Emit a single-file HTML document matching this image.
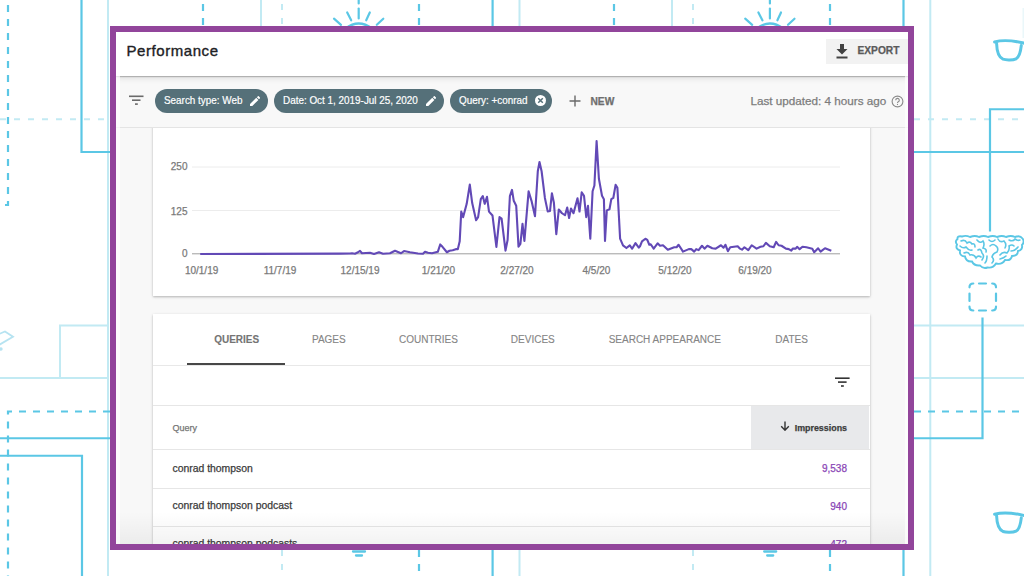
<!DOCTYPE html>
<html><head><meta charset="utf-8">
<style>
*{margin:0;padding:0;box-sizing:border-box}
html,body{width:1024px;height:576px;overflow:hidden;background:#fff;font-family:"Liberation Sans",sans-serif}
.abs{position:absolute}
#bg{position:absolute;left:0;top:0}
#frame{position:absolute;left:110px;top:26px;width:804px;height:524px;border:6px solid #92459b;background:#f5f5f5;overflow:hidden}
#inner{position:absolute;left:0;top:0;width:792px;height:512px;overflow:hidden}

#ui{position:absolute;left:0;top:0;width:1024px;height:576px;clip-path:inset(32px 116px 32px 116px);background:transparent}
#uibg{}
#frame2{position:absolute;left:110px;top:26px;width:804px;height:524px;border:6px solid #92459b;z-index:10}
.t{line-height:1;white-space:nowrap;-webkit-text-stroke-width:.25px}
.b{font-weight:bold}
.chip{position:absolute;top:88.6px;height:24.5px;border-radius:12.25px;background:#557079;z-index:4}
.chip span{-webkit-text-stroke-width:.2px;position:absolute;top:6.4px;font-size:11px;transform:scaleX(.9);transform-origin:0 0;line-height:1;color:#fff;white-space:nowrap}
.pen{position:absolute;top:7.6px}
.card{background:#fff;box-shadow:0 1px 2px rgba(0,0,0,.22),0 1px 4px rgba(0,0,0,.08);z-index:1}
.ax{font-size:10px;color:#7a7a7a;z-index:2}
.xl{width:80px;text-align:center}
.tab{top:334.8px;width:80px;margin-left:0;text-align:center;font-size:10px;color:#858585;-webkit-text-stroke-width:.12px;z-index:2}
.row{left:172.5px;font-size:10.4px;color:#3a3a3a;z-index:2}
.num{left:760px;width:87px;text-align:right;font-size:10px;color:#8a46b6;z-index:2}
</style></head><body>
<svg id="bg" width="1024" height="576" viewBox="0 0 1024 576">
<g fill="none" stroke-linecap="butt">
<!-- light lines -->
<g stroke="#c2eaf3" stroke-width="2">
<line x1="108" y1="0" x2="108" y2="576"/>
<line x1="930.3" y1="0" x2="930.3" y2="576"/>
<line x1="1023.5" y1="8" x2="1023.5" y2="38" stroke="#eaf7fa"/>
<line x1="261" y1="0" x2="261" y2="30"/>
<line x1="519.5" y1="0" x2="519.5" y2="576"/>
<line x1="672" y1="0" x2="672" y2="30"/>
<polyline points="108,325.5 60,325.5 60,378"/>
<line x1="0" y1="378" x2="108" y2="378"/>
<line x1="914" y1="325.5" x2="1024" y2="325.5"/>
<line x1="914" y1="378" x2="1024" y2="378"/>
</g>
<g stroke="#c2eaf3" stroke-width="2" stroke-dasharray="6 8">
<line x1="0" y1="119.25" x2="107" y2="119.25"/>
<line x1="914" y1="119.25" x2="1024" y2="119.25"/>
<line x1="282" y1="4" x2="282" y2="576"/>
<line x1="693" y1="4" x2="693" y2="576"/>
</g>
<!-- medium lines -->
<g stroke="#5bc7e5" stroke-width="2.2">
<polyline points="81.5,0 81.5,152 110,152"/>
<line x1="0" y1="438.25" x2="110" y2="438.25"/>
<polyline points="0,455.75 82,455.75 82,576"/>
<line x1="492.6" y1="0" x2="492.6" y2="576"/>
<line x1="903.5" y1="0" x2="903.5" y2="576"/>
<polyline points="1024,109.25 990,109.25 990,231.5"/>
<line x1="914" y1="152" x2="1024" y2="152"/>
<polyline points="982.5,317.5 982.5,438.25 914,438.25"/>
</g>
<g stroke="#5bc7e5" stroke-width="2.2" stroke-dasharray="7 7">
<polyline points="8,5 8,205 4,205"/>
<polyline points="110,411.5 8,411.5 8,576"/>
<line x1="914" y1="411.5" x2="1024" y2="411.5"/>
<line x1="203" y1="4" x2="203" y2="30"/>
<line x1="419" y1="4" x2="419" y2="576"/>
<line x1="614" y1="4" x2="614" y2="30"/>
<line x1="830" y1="4" x2="830" y2="576"/>
</g>
</g>

<g stroke="#5bc7e5" stroke-width="2.2" fill="none" stroke-linecap="round">
 <path d="M969.5,287.3 Q969.5,283.5 973.3,283.5 M979,283.5 H986 M992.2,283.5 Q996,283.5 996,287.3 M969.5,293.5 V301 M996,293.5 V301 M969.5,306.7 Q969.5,310.5 973.3,310.5 M992.2,310.5 Q996,310.5 996,306.7 M979,310.5 H986"/>
</g>
<g fill="none" stroke="#5bc7e5" stroke-width="2.2" stroke-linecap="round">
 <g id="bulb">
  <line x1="358.7" y1="-2" x2="358.7" y2="3.5"/>
  <line x1="358.7" y1="8.5" x2="358.7" y2="18.5"/>
  <line x1="347.2" y1="12.5" x2="351.2" y2="20.3"/>
  <line x1="369.8" y1="12.5" x2="366.2" y2="20.3"/>
  <line x1="334" y1="18.7" x2="341" y2="24.8"/>
  <line x1="383.3" y1="18.7" x2="376.8" y2="24.8"/>
  <path d="M345.5,28.5 Q358.7,18.5 372,28.5"/>
 </g>
 <use href="#bulb" x="411.2"/>
 <g id="bulbb" stroke-width="2.3">
  <line x1="353" y1="551.5" x2="365" y2="551.5"/>
  <line x1="356" y1="555.5" x2="362" y2="555.5"/>
 </g>
 <use href="#bulbb" x="411.2"/>
 <g id="glass" stroke-width="3">
  <path d="M994.6,42 Q1006,38.6 1026,43.6"/>
  <path d="M996.6,43.5 C996.8,50 998,57 1003,59.2 C1006,60.2 1013,60.2 1016,58.8 C1019.5,57 1020.6,52 1021.3,45.5"/>
 </g>
 <use href="#glass" y="472.3"/>
 <g stroke-width="1.9">
 <path d="M957.5,239 Q957,235.5 962,236.5 Q966,235 970,237 Q975,235 979,237 Q984,235 988,237 Q993,235 997,237 Q1002,235 1006,237 Q1011,235 1015,237 Q1020,235 1022.5,238.5 Q1025,242 1022,245 Q1023,250 1018,251 Q1018,256 1012,256 Q1011,261 1005,260 Q1002,265 996,263.5 Q993,268.5 987.5,267.5 Q983,269 980,265.5 Q974,266 972,261.5 Q966,262 965,256.5 Q959,256 960,250.5 Q955,249 957,244.5 Q954.5,241.5 957.5,239 Z"/>
 <path d="M961,241 Q965,239 967,243 Q970,241 972,244 Q975,243 975,247 M960,246 Q963,249 966,247 Q969,251 972,250 M964,253 Q968,251 970,255 Q974,254 976,258 Q978,255 981,257 M977,240 Q980,244 983,241 Q985,244 983,248 Q987,249 986,252 M978,250 Q981,248 982,253 Q985,256 982,260 M989,240 Q992,243 995,240 M990,246 Q993,243 996,246 Q999,248 997,252 Q993,253 992,257 Q995,260 992,263 M987,256 Q987,261 985,263 M998,239 Q1000,243 1004,241 Q1007,244 1005,248 M1000,255 Q1003,251 1007,253 Q1010,250 1009,246 Q1012,244 1014,246 M1009,240 Q1013,242 1015,239 Q1018,241 1020,240 M1011,251 Q1015,251 1018,247 M1000,259 Q1004,258 1006,256" stroke-width="1.6"/>
 </g>
</g>
<g fill="none" stroke="#b6e3f1" stroke-width="1.8">
 <polyline points="-2,334.5 5,331.5 13,336.7 -1,345"/>
 <circle cx="1" cy="349" r="0.8" fill="#b6e3f1"/>
</g>
</svg>


<div id="ui">
 <div class="abs" style="left:116px;top:32px;width:792px;height:512px;background:#f8f8f8"></div>
 <!-- header -->
 <div class="abs" style="left:116px;top:32px;width:792px;height:44px;background:#fff;box-shadow:0 1px 1px rgba(0,0,0,.22),0 2px 6px rgba(0,0,0,.12);z-index:3"></div>
 <div class="abs t" style="left:126.5px;top:43.4px;font-size:15px;letter-spacing:.56px;-webkit-text-stroke:.35px #202124;color:#202124;z-index:4">Performance</div>
 <div class="abs" style="left:826px;top:38.5px;width:82px;height:25.5px;background:#f2f2f2;z-index:4"></div>
 <svg class="abs" style="left:836px;top:43.6px;z-index:5" width="12" height="15" viewBox="0 0 12 15"><path d="M4 0h4v5h3.5L6 10.5 0.5 5H4z" fill="#424242"/><rect x="0.5" y="12.5" width="11" height="2" fill="#424242"/></svg>
 <div class="abs t b" style="left:857.5px;top:46.3px;font-size:10.2px;color:#5a5a5a;z-index:5">EXPORT</div>
 <!-- filter bar -->
 <div class="abs" style="left:116px;top:76px;width:792px;height:51.5px;background:#f8f8f8;border-bottom:1.2px solid #e4e4e4;z-index:2"></div>
 <svg class="abs" style="left:129px;top:95px;z-index:4" width="15" height="11" viewBox="0 0 15 11"><rect x="0" y="0.5" width="14.5" height="1.6" fill="#6a6a6a"/><rect x="3" y="4.4" width="8.5" height="1.6" fill="#6a6a6a"/><rect x="6" y="8.3" width="2.8" height="1.6" fill="#6a6a6a"/></svg>
 <div class="chip" style="left:154.7px;width:113px"><span style="left:9.3px">Search type: Web</span><svg class="pen" style="left:95px" width="10.2" height="10.2" viewBox="3 3 18 18"><path d="M3 17.25V21h3.75L17.81 9.94l-3.75-3.75L3 17.25zM20.71 7.04c.39-.39.39-1.02 0-1.41l-2.34-2.34c-.39-.39-1.02-.39-1.41 0l-1.83 1.83 3.75 3.75 1.83-1.83z" fill="#fff"/></svg></div>
 <div class="chip" style="left:274.4px;width:169.2px"><span style="left:8.4px">Date: Oct 1, 2019-Jul 25, 2020</span><svg class="pen" style="left:151.2px" width="10.2" height="10.2" viewBox="3 3 18 18"><path d="M3 17.25V21h3.75L17.81 9.94l-3.75-3.75L3 17.25zM20.71 7.04c.39-.39.39-1.02 0-1.41l-2.34-2.34c-.39-.39-1.02-.39-1.41 0l-1.83 1.83 3.75 3.75 1.83-1.83z" fill="#fff"/></svg></div>
 <div class="chip" style="left:449.8px;width:102.7px"><span style="left:9.6px">Query: +conrad</span><svg class="abs" style="left:85px;top:6.6px" width="11" height="11" viewBox="0 0 11 11"><circle cx="5.5" cy="5.5" r="5.5" fill="#fff"/><path d="M3.2 3.2L7.8 7.8M7.8 3.2L3.2 7.8" stroke="#557079" stroke-width="1.5"/></svg></div>
 <svg class="abs" style="left:569px;top:95px;z-index:4" width="12" height="12" viewBox="0 0 12 12"><path d="M6 0.5V11.5M0.5 6H11.5" stroke="#6a6a6a" stroke-width="1.4"/></svg>
 <div class="abs t b" style="left:590.5px;top:96.8px;font-size:10.2px;color:#6e6e6e;z-index:4">NEW</div>
 <div class="abs t" style="left:750.5px;top:94.5px;font-size:11.7px;color:#7c7c7c;z-index:4">Last updated: 4 hours ago</div>
 <svg class="abs" style="left:890.5px;top:94.5px;z-index:4" width="13" height="13" viewBox="0 0 13 13"><circle cx="6.5" cy="6.5" r="5.4" fill="none" stroke="#8a8a8a" stroke-width="1.1"/><path d="M4.7 5.2a1.8 1.8 0 1 1 2.6 1.6c-.6.3-.8.6-.8 1.2" fill="none" stroke="#8a8a8a" stroke-width="1.1"/><circle cx="6.5" cy="9.4" r=".6" fill="#8a8a8a"/></svg>

 <!-- card 1 -->
 <div class="abs card" style="left:152.5px;top:110px;width:717px;height:186px"></div>
 <svg class="abs" style="left:0;top:0;z-index:1" width="1024" height="576">
  <g stroke="#ececec" stroke-width="1">
   <line x1="192" y1="167" x2="840" y2="167"/>
   <line x1="192" y1="210.5" x2="840" y2="210.5"/>
  </g>
  <line x1="192" y1="253.8" x2="840" y2="253.8" stroke="#9e9e9e" stroke-width="1"/>
  <polyline points="200.2,253.7 340,253.4 350,253.2 352,253 355,253.5 358,252 360,250.6 362,253 366,252.8 370,252.6 374,253.8 379,252 383,253.5 390,253 395,250.5 401,253 404,250.8 410,252 418,253.2 423,253.5 425,251.5 428,252.5 432,253 437.8,251.6 440.2,244.2 442.5,246.6 446.9,252 449.5,250.5 452.7,250 455.8,248.9 457.8,248.9 459.7,241.1 461.25,211.4 463.1,216.9 466.7,203.6 469.8,184.4 472.2,202.8 476.1,220 478.1,216.9 480.8,198.9 482.8,195.8 484.7,203.6 487,196.6 489,211.4 492.5,215.3 496.4,246.6 499.5,216.9 501.6,218.4 505.5,250.4 507.6,239.8 509.9,195.8 512,189.7 513.75,200.6 516.2,205.4 518.5,246.4 520.4,243.6 522.5,223.5 524.4,240.7 528.6,191.1 531.5,200.6 535,215.9 537.8,171 539.5,161.8 541.6,171 544.9,197.7 547.7,211.1 550,210.7 551.9,193 553.9,202.5 556.3,234 558.8,209.2 562,213 565,215 567.2,207.3 569.1,217.8 571,208.25 573.5,213 577.5,198 579.5,211.3 581.7,192.1 584,195.5 586.25,216.9 588,205.6 590.3,238.4 592.6,191 594.4,185.3 596.6,140.8 598.9,178.5 602,195.5 603.9,198.9 605,240.6 606.8,210.1 609.5,209 611.3,198.9 613.3,197.7 615.6,184.6 617.4,187.6 620.1,238.4 623,245.1 626.4,247.8 629.8,245.1 632.1,248.5 635.5,242.9 638.8,247.4 640,246 642,241.1 645.4,238.5 647.3,239.6 649.3,244.5 650.7,244 653.7,248.4 657.6,243.1 660,245.5 663,245 667.8,249.4 674.2,247 676.6,247 678.6,244.5 683,251.4 688.8,248.9 691.3,248.9 694.2,251.4 696.2,248.9 698.6,249.9 702,245.5 704.5,248.4 707.4,245.5 712.3,248 715.7,248.4 721,245 723.5,247.5 725.4,244.5 727.9,250.9 730.3,247 737.7,246 740,248.4 742,249.4 744.4,247 748.3,249.9 751.7,245 756.6,248.4 760.5,246.5 763.4,246 765.9,242.6 769.8,246 773.7,247 776.1,241.6 778.6,245 781.5,245.5 785.9,248.4 788.8,248.9 791.3,250.4 792.7,248.4 795.7,248.4 797.1,246.5 799.6,248.9 802.5,246.5 806.4,247 812.3,248.4 814.2,251.9 818.1,248 820.6,251.4 825,248 831.3,250.4" fill="none" stroke="#6249b6" stroke-width="2.1" stroke-linejoin="round" transform="translate(0 .25)"/>
 </svg>
 <div class="abs t ax" style="left:150px;width:37.5px;text-align:right;top:162.3px">250</div>
 <div class="abs t ax" style="left:150px;width:37.5px;text-align:right;top:206.6px">125</div>
 <div class="abs t ax" style="left:150px;width:37.5px;text-align:right;top:249.3px">0</div>
 <div class="abs t ax xl" style="left:161.6px;top:266px">10/1/19</div>
 <div class="abs t ax xl" style="left:240px;top:266px">11/7/19</div>
 <div class="abs t ax xl" style="left:320px;top:266px">12/15/19</div>
 <div class="abs t ax xl" style="left:398.5px;top:266px">1/21/20</div>
 <div class="abs t ax xl" style="left:477px;top:266px">2/27/20</div>
 <div class="abs t ax xl" style="left:556.4px;top:266px">4/5/20</div>
 <div class="abs t ax xl" style="left:635px;top:266px">5/12/20</div>
 <div class="abs t ax xl" style="left:715px;top:266px">6/19/20</div>

 <!-- card 2 -->
 <div class="abs card" style="left:152.5px;top:314px;width:717px;height:300px"></div>
 <div class="abs" style="left:152.5px;top:364.5px;width:717px;height:1px;background:#e8e8e8;z-index:1"></div>
 <div class="abs t tab b" style="left:196.7px;color:#747474">QUERIES</div>
 <div class="abs t tab" style="left:288.85px">PAGES</div>
 <div class="abs t tab" style="left:388.5px">COUNTRIES</div>
 <div class="abs t tab" style="left:492.8px">DEVICES</div>
 <div class="abs t tab" style="left:604.8px;width:120px;margin-left:0">SEARCH APPEARANCE</div>
 <div class="abs t tab" style="left:751.6px">DATES</div>
 <div class="abs" style="left:187.3px;top:362.7px;width:97.6px;height:2px;background:#474747;z-index:2"></div>
 <svg class="abs" style="left:835px;top:377px;z-index:2" width="15" height="11" viewBox="0 0 15 11"><rect x="0" y="0.4" width="14.6" height="1.6" fill="#333"/><rect x="3" y="4.3" width="8.6" height="1.6" fill="#333"/><rect x="6" y="8.2" width="2.8" height="1.6" fill="#333"/></svg>
 <div class="abs" style="left:152.5px;top:405px;width:717px;height:1px;background:#e6e6e6;z-index:1"></div>
 <div class="abs" style="left:751.3px;top:405.5px;width:117.7px;height:44px;background:#e8e9eb;z-index:1"></div>
 <div class="abs t" style="left:172.5px;top:424.4px;font-size:9px;color:#757575;z-index:2">Query</div>
 <svg class="abs" style="left:779.5px;top:421px;z-index:2" width="10" height="10" viewBox="0 0 10 10"><path d="M5 0.5V9M1.2 5.3L5 9.2 8.8 5.3" fill="none" stroke="#333" stroke-width="1.4"/></svg>
 <div class="abs t b" style="left:740px;width:107px;text-align:right;top:423.6px;font-size:8.9px;color:#3c3c3c;z-index:2">Impressions</div>
 <div class="abs" style="left:152.5px;top:449px;width:717px;height:1px;background:#e6e6e6;z-index:1"></div>
 <div class="abs" style="left:152.5px;top:487.5px;width:717px;height:1px;background:#e6e6e6;z-index:1"></div>
 <div class="abs" style="left:152.5px;top:525.8px;width:717px;height:1px;background:#e6e6e6;z-index:1"></div>
 <div class="abs t row" style="top:463.9px">conrad thompson</div>
 <div class="abs t row" style="top:501.1px">conrad thompson podcast</div>
 <div class="abs t row" style="top:538.6px">conrad thompson podcasts</div>
 <div class="abs t num" style="top:463.5px">9,538</div>
 <div class="abs t num" style="top:501.5px">940</div>
 <div class="abs t num" style="top:539.5px">472</div>
 <div class="abs" style="left:116px;top:512px;width:792px;height:33px;background:linear-gradient(rgba(0,0,0,0),rgba(0,0,0,.05));z-index:6"></div>
</div>
<div class="abs" style="left:116px;top:76px;width:3.5px;height:468px;background:rgba(255,255,255,.65);z-index:9"></div>
<div class="abs" style="left:904.5px;top:76px;width:3.5px;height:468px;background:rgba(255,255,255,.65);z-index:9"></div>
<div id="frame2"></div>

</body></html>
